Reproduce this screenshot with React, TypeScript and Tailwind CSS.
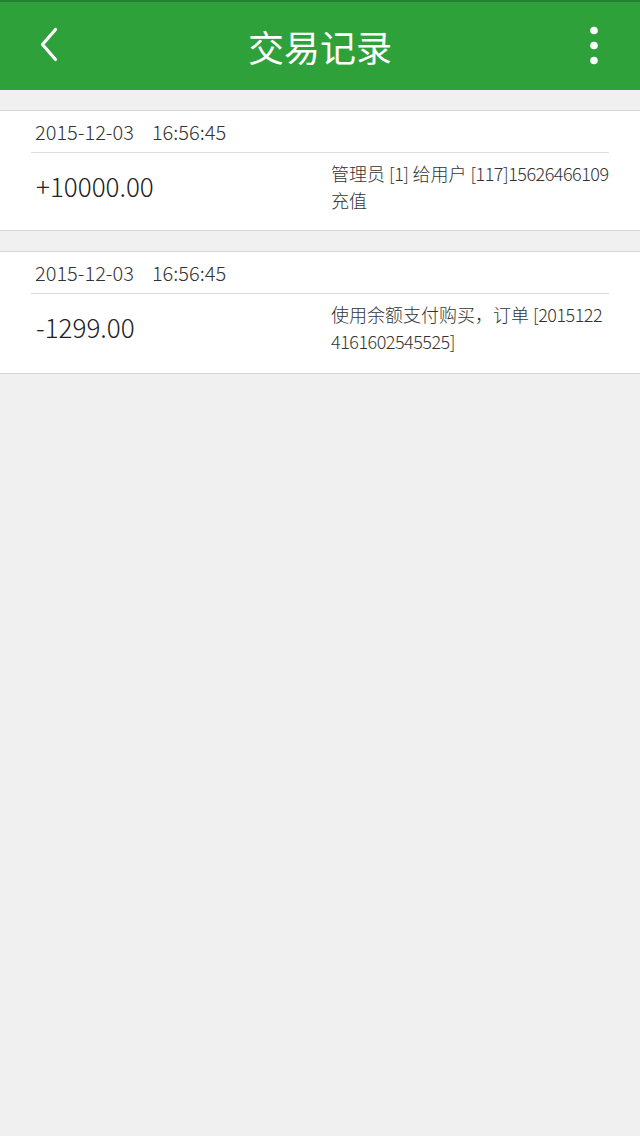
import React from "react";

const font = { fontFamily: '"Noto Sans CJK SC", "Noto Sans", sans-serif' };

function Tight({ text }: { text: string }) {
  const parts = text.split(/([0-9\[\]]+)/);
  return (
    <>
      {parts.map((p, i) =>
        /^[0-9\[\]]+$/.test(p) ? (
          <span key={i} className="tracking-[-0.5px]">
            {p}
          </span>
        ) : (
          <span key={i}>{p}</span>
        )
      )}
    </>
  );
}

function Record({
  date,
  time,
  amount,
  lines,
  tall,
}: {
  date: string;
  time: string;
  amount: string;
  lines: string[];
  tall?: boolean;
}) {
  return (
    <div className="bg-white border-y border-[#d6d6d6]">
      <div className="mx-[31px]">
        <div className="h-[42px] flex items-center pl-[4px] border-b border-[#dcdcdc] text-[20px] font-light text-[#333]">
          <span>{date}</span>
          <span className="ml-[18px]">{time}</span>
        </div>
        <div className={`flex items-center pt-[7px] ${tall ? "pb-[18px]" : "pb-[16px]"}`}>
          <div className="flex-1 pl-[5px] mb-[3px] text-[26px] text-[#222] font-light">{amount}</div>
          <div className="w-[278px] text-[18px] leading-[27px] text-[#333] font-light">
            {lines.map((l, i) => (
              <div key={i} className="whitespace-nowrap">
                <Tight text={l} />
              </div>
            ))}
          </div>
        </div>
      </div>
    </div>
  );
}

export default function App() {
  return (
    <div className="min-h-screen bg-[#f0f0f0]" style={font}>
      <div className="h-[90px] bg-[#2ea13b] border-t-2 border-[#22812e] flex items-center">
        <div className="w-[120px] pl-[39px] flex items-center">
          <svg width="24" height="40" viewBox="0 0 24 40">
            <path
              d="M16.5 3.5 L3.5 18.5 L16.5 33.5"
              fill="none"
              stroke="white"
              strokeWidth="3.2"
              strokeLinecap="round"
              strokeLinejoin="round"
            />
          </svg>
        </div>
        <div className="flex-1 text-center text-white text-[36px] leading-none">交易记录</div>
        <div className="w-[120px] pr-[40px] flex items-center justify-end">
          <svg width="12" height="40" viewBox="0 0 12 40">
            <circle cx="6" cy="4.5" r="3.8" fill="white" />
            <circle cx="6" cy="19.5" r="3.8" fill="white" />
            <circle cx="6" cy="34.5" r="3.8" fill="white" />
          </svg>
        </div>
      </div>
      <div className="pt-[20px] flex flex-col gap-[20px]">
        <Record
          date="2015-12-03"
          time="16:56:45"
          amount="+10000.00"
          lines={["管理员 [1] 给用户 [117]15626466109", "充值"]}
        />
        <Record
          date="2015-12-03"
          time="16:56:45"
          amount="-1299.00"
          lines={["使用余额支付购买，订单 [2015122", "4161602545525]"]}
          tall
        />
      </div>
    </div>
  );
}
